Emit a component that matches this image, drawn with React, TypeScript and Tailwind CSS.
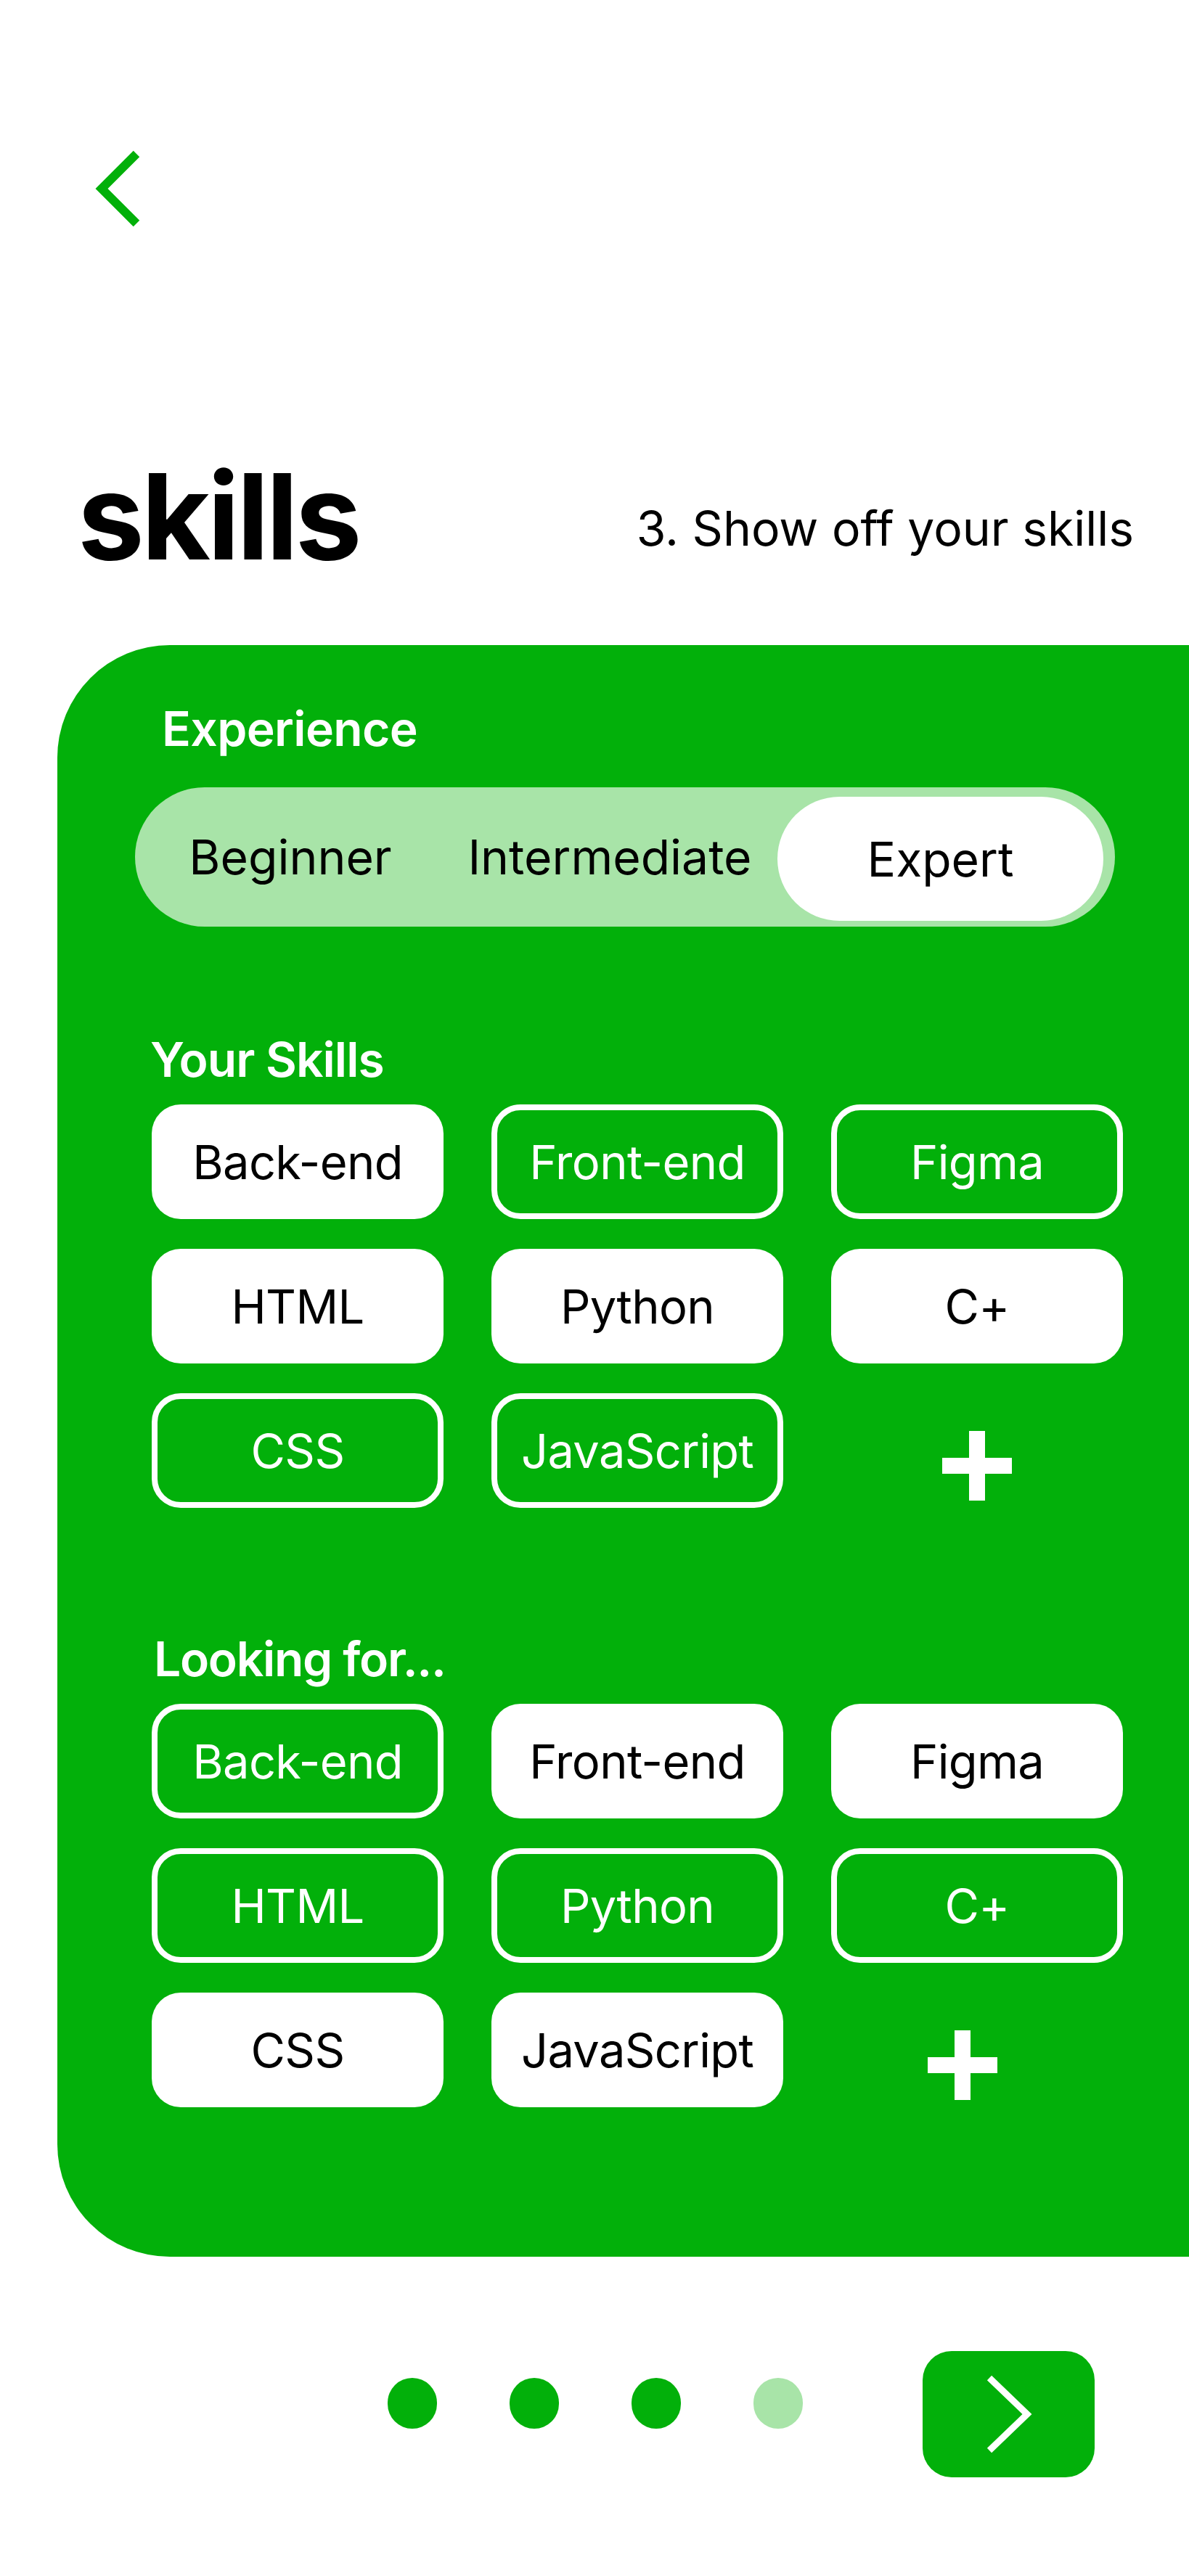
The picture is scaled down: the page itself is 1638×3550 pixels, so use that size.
const GREEN = "bg-[#02B00A]";

type Chip = { label: string; filled: boolean };

const yourSkills: Chip[] = [
  { label: "Back-end", filled: true },
  { label: "Front-end", filled: false },
  { label: "Figma", filled: false },
  { label: "HTML", filled: true },
  { label: "Python", filled: true },
  { label: "C+", filled: true },
  { label: "CSS", filled: false },
  { label: "JavaScript", filled: false },
];

const lookingFor: Chip[] = [
  { label: "Back-end", filled: false },
  { label: "Front-end", filled: true },
  { label: "Figma", filled: true },
  { label: "HTML", filled: false },
  { label: "Python", filled: false },
  { label: "C+", filled: false },
  { label: "CSS", filled: true },
  { label: "JavaScript", filled: true },
];

const PlusIcon = () => (
  <svg width="96" height="96" viewBox="0 0 96 96">
    <rect x="37" y="0" width="22" height="96" fill="#fff" />
    <rect x="0" y="37" width="96" height="22" fill="#fff" />
  </svg>
);

const SkillGrid = ({ chips, plusClass }: { chips: Chip[]; plusClass: string }) => (
  <div className="ml-[23px] grid grid-cols-[repeat(3,402px)] gap-x-[66px] gap-y-[41px]">
    {chips.map((c, i) => (
      <div
        key={i}
        className={
          c.filled
            ? "flex h-[158px] items-center justify-center rounded-[40px] bg-white text-[65px] leading-none tracking-[-0.01em] text-black"
            : "flex h-[158px] items-center justify-center rounded-[40px] border-[8px] border-white text-[65px] leading-none tracking-[-0.01em] text-white"
        }
      >
        {c.label}
      </div>
    ))}
    <div className={"flex h-[158px] items-center justify-center " + plusClass}>
      <PlusIcon />
    </div>
  </div>
);

export default function App() {
  return (
    <div className="min-h-[3550px] w-full overflow-hidden bg-white font-['Inter','Noto_Sans',sans-serif]">
      {/* back */}
      <div className="pl-[131px] pt-[208px]">
        <svg width="64" height="104" viewBox="0 0 64 104" className="overflow-visible">
          <path d="M57 4 L9 52 L57 100" fill="none" stroke="#02B00A" strokeWidth="12" />
        </svg>
      </div>

      <div className="mt-[318px] flex items-end justify-between pl-[107px] pr-[76px]">
        <h1 className="text-[164px] font-bold leading-none tracking-[-0.025em] text-black">skills</h1>
        <p className="mb-[33px] text-[66px] leading-none text-black">3. Show off your skills</p>
      </div>

      <div className={"ml-[79px] mt-[95px] rounded-l-[155px] pb-[206px] pl-[107px] pt-[82px] " + GREEN}>
        <h2 className="ml-[37px] text-[66px] font-semibold leading-none tracking-[-0.01em] text-white">Experience</h2>

        <div className="mt-[48px] flex h-[192px] w-[1350px] items-center rounded-full bg-[#A8E4A8]">
          <div className="w-[428px] text-center text-[66px] leading-none text-black">Beginner</div>
          <div className="w-[452px] text-center text-[66px] leading-none text-black">Intermediate</div>
          <div className="ml-[5px] mt-[13px] flex h-[171px] w-[449px] items-center justify-center self-start rounded-full bg-white text-[66px] leading-none text-black">
            Expert
          </div>
        </div>

        <h2 className="ml-[21px] mt-[150px] text-[66px] font-semibold leading-none tracking-[-0.015em] text-white">Your Skills</h2>
        <div className="mt-[29px]">
          <SkillGrid chips={yourSkills} plusClass="pt-[42px]" />
        </div>

        <h2 className="ml-[26px] mt-[175px] text-[66px] font-semibold leading-none tracking-[-0.02em] text-white">Looking for...</h2>
        <div className="mt-[29px]">
          <SkillGrid chips={lookingFor} plusClass="pt-[42px] pr-[40px]" />
        </div>
      </div>

      {/* pager */}
      <div className="mt-[130px] flex items-start pl-[534px]">
        <div className="mt-[37px] flex gap-[100px]">
          <div className={"h-[70px] w-[68px] rounded-full " + GREEN} />
          <div className={"h-[70px] w-[68px] rounded-full " + GREEN} />
          <div className={"h-[70px] w-[68px] rounded-full " + GREEN} />
          <div className="h-[70px] w-[68px] rounded-full bg-[#A8E4A8]" />
        </div>
        <button className={"ml-[165px] flex h-[174px] w-[237px] items-center justify-center rounded-[40px] " + GREEN}>
          <svg width="61" height="104" viewBox="0 0 61 104" className="overflow-visible">
            <path d="M4 2 L56 52 L4 102" fill="none" stroke="#fff" strokeWidth="9" />
          </svg>
        </button>
      </div>
    </div>
  );
}
